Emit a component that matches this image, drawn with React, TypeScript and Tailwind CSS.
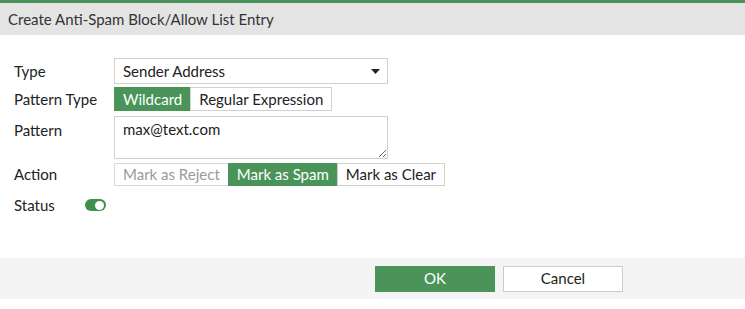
import { ChangeEvent, useState } from "react";

const GREEN = "bg-[#4a9459]";

const Segmented = ({
  options,
  active,
  disabled = [],
  h,
}: {
  options: string[];
  active: string;
  disabled?: string[];
  h: string;
}) => (
  <div className="flex">
    {options.map((opt, i) => {
      const on = opt === active;
      const off = disabled.includes(opt);
      return (
        <button
          key={opt}
          className={`${h} px-[8px] border text-[15px] leading-none ${
            i > 0 ? "-ml-px" : ""
          } ${
            on
              ? `${GREEN} border-[#4a9459] text-white`
              : off
              ? "bg-white border-[#d9d9d9] text-[#9a9a9a]"
              : "bg-white border-[#d0d0d0] text-[#222]"
          }`}
        >
          {opt}
        </button>
      );
    })}
  </div>
);

export default function App() {
  const [pattern, setPattern] = useState("max@text.com");

  return (
    <div className="w-[745px] h-[309px] bg-white font-['Lato','Open_Sans',sans-serif] text-[15px] text-[#222] flex flex-col">
      <div className="h-[3px] bg-[#4a9459]" />
      <div className="h-[32px] bg-[#e4e4e4] flex items-center pl-[8px] text-[15px] text-[#333]">
        Create Anti-Spam Block/Allow List Entry
      </div>

      <div className="flex flex-col pl-[14px] pt-[23px]">
        <div className="flex items-center h-[26px]">
          <span className="w-[100px]">Type</span>
          <div className="w-[274px] h-[26px] border border-[#d0d0d0] flex items-center justify-between pl-[8px] pr-[7px]">
            <span>Sender Address</span>
            <svg width="9" height="5" viewBox="0 0 9 5">
              <path d="M0 0h9L4.5 5z" fill="#222" />
            </svg>
          </div>
        </div>

        <div className="flex items-center mt-[3px] h-[24px]">
          <span className="w-[100px]">Pattern Type</span>
          <Segmented
            options={["Wildcard", "Regular Expression"]}
            active="Wildcard"
            h="h-[24px]"
          />
        </div>

        <div className="flex items-start mt-[5px]">
          <span className="w-[100px] mt-[3px]">Pattern</span>
          <textarea
            value={pattern}
            onChange={(e: ChangeEvent<HTMLTextAreaElement>) => setPattern(e.target.value)}
            className="w-[274px] h-[43px] border border-[#d0d0d0] px-[8px] py-[3px] text-[15px] leading-[18px] outline-none"
          />
        </div>

        <div className="flex items-center mt-[4px] h-[23px]">
          <span className="w-[100px]">Action</span>
          <Segmented
            options={["Mark as Reject", "Mark as Spam", "Mark as Clear"]}
            active="Mark as Spam"
            disabled={["Mark as Reject"]}
            h="h-[23px]"
          />
        </div>

        <div className="flex items-center mt-[7px] h-[24px]">
          <span className="w-[71px]">Status</span>
          <div className="w-[21px] h-[12px] rounded-full bg-[#3f8f4e] flex items-center justify-end pr-[2px]">
            <div className="w-[9px] h-[9px] rounded-full bg-white" />
          </div>
        </div>
      </div>

      <div className="mt-auto mb-[10px] h-[41px] bg-[#f4f4f4] flex items-center pl-[375px] gap-[8px]">
        <button className={`w-[120px] h-[26px] ${GREEN} text-white text-[15px]`}>OK</button>
        <button className="w-[120px] h-[26px] bg-white border border-[#cccccc] text-[#222] text-[15px]">
          Cancel
        </button>
      </div>
    </div>
  );
}
